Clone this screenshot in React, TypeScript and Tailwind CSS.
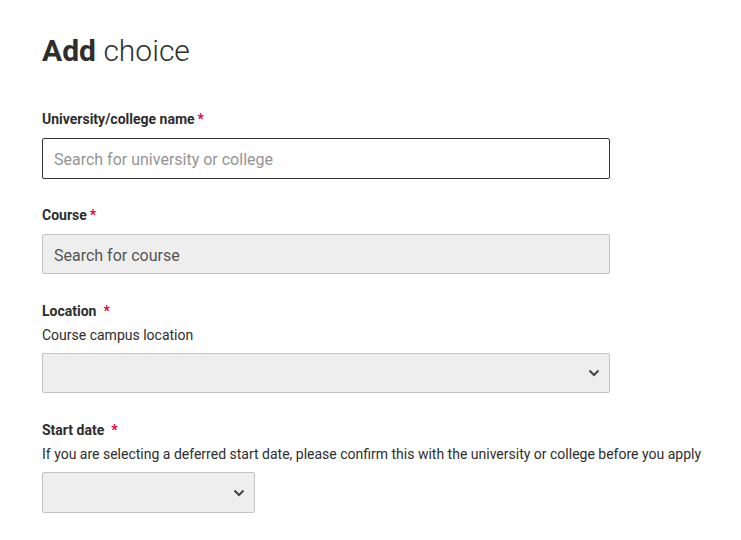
import React from "react";

const Chevron = () => (
  <svg width="12" height="8" viewBox="0 0 12 8" className="absolute right-[9px] top-1/2 -translate-y-1/2">
    <path d="M1.5 1.5 L6 6 L10.5 1.5" fill="none" stroke="#444" strokeWidth="2" />
  </svg>
);

const Req = ({ spaced }: { spaced?: boolean }) => (
  <span className={`text-[#e3003a] ${spaced ? "ml-[7px]" : "ml-[3px]"}`}>*</span>
);

export default function App() {
  return (
    <div className="min-h-[540px] bg-white pl-[42px] pt-[32px] text-[#2d2d2d]" style={{ fontFamily: "Roboto, 'Noto Sans', sans-serif" }}>
      <h1 className="text-[30px] leading-[38px] text-[#2e2e2e]">
        <span className="font-bold">Add</span> <span className="font-light">choice</span>
      </h1>

      <div className="mt-[39px]">
        <div className="text-[14px] leading-[20px] font-bold">
          University/college name<Req />
        </div>
        <div className="mt-[9px] h-[41px] w-[568px] border border-[#333] rounded-[2px] flex items-center px-[11px] pt-[3px]">
          <span className="text-[16px] text-[#949494]">Search for university or college</span>
        </div>
      </div>

      <div className="mt-[26px]">
        <div className="text-[14px] leading-[20px] font-bold">
          Course<Req />
        </div>
        <div className="mt-[9px] h-[40px] w-[568px] border border-[#c3c3c3] bg-[#eeeeee] rounded-[2px] flex items-center px-[11px] pt-[3px]">
          <span className="text-[16px] text-[#555]">Search for course</span>
        </div>
      </div>

      <div className="mt-[27px]">
        <div className="text-[14px] leading-[20px] font-bold">
          Location<Req spaced />
        </div>
        <div className="mt-[4px] text-[14px] leading-[20px]">Course campus location</div>
        <div className="relative mt-[8px] h-[40px] w-[568px] border border-[#c3c3c3] bg-[#eeeeee] rounded-[2px]">
          <Chevron />
        </div>
      </div>

      <div className="mt-[27px]">
        <div className="text-[14px] leading-[20px] font-bold">
          Start date<Req spaced />
        </div>
        <div className="mt-[4px] text-[14px] leading-[20px]">
          If you are selecting a deferred start date, please confirm this with the university or college before you apply
        </div>
        <div className="relative mt-[8px] h-[41px] w-[213px] border border-[#c3c3c3] bg-[#eeeeee] rounded-[2px]">
          <Chevron />
        </div>
      </div>
    </div>
  );
}
